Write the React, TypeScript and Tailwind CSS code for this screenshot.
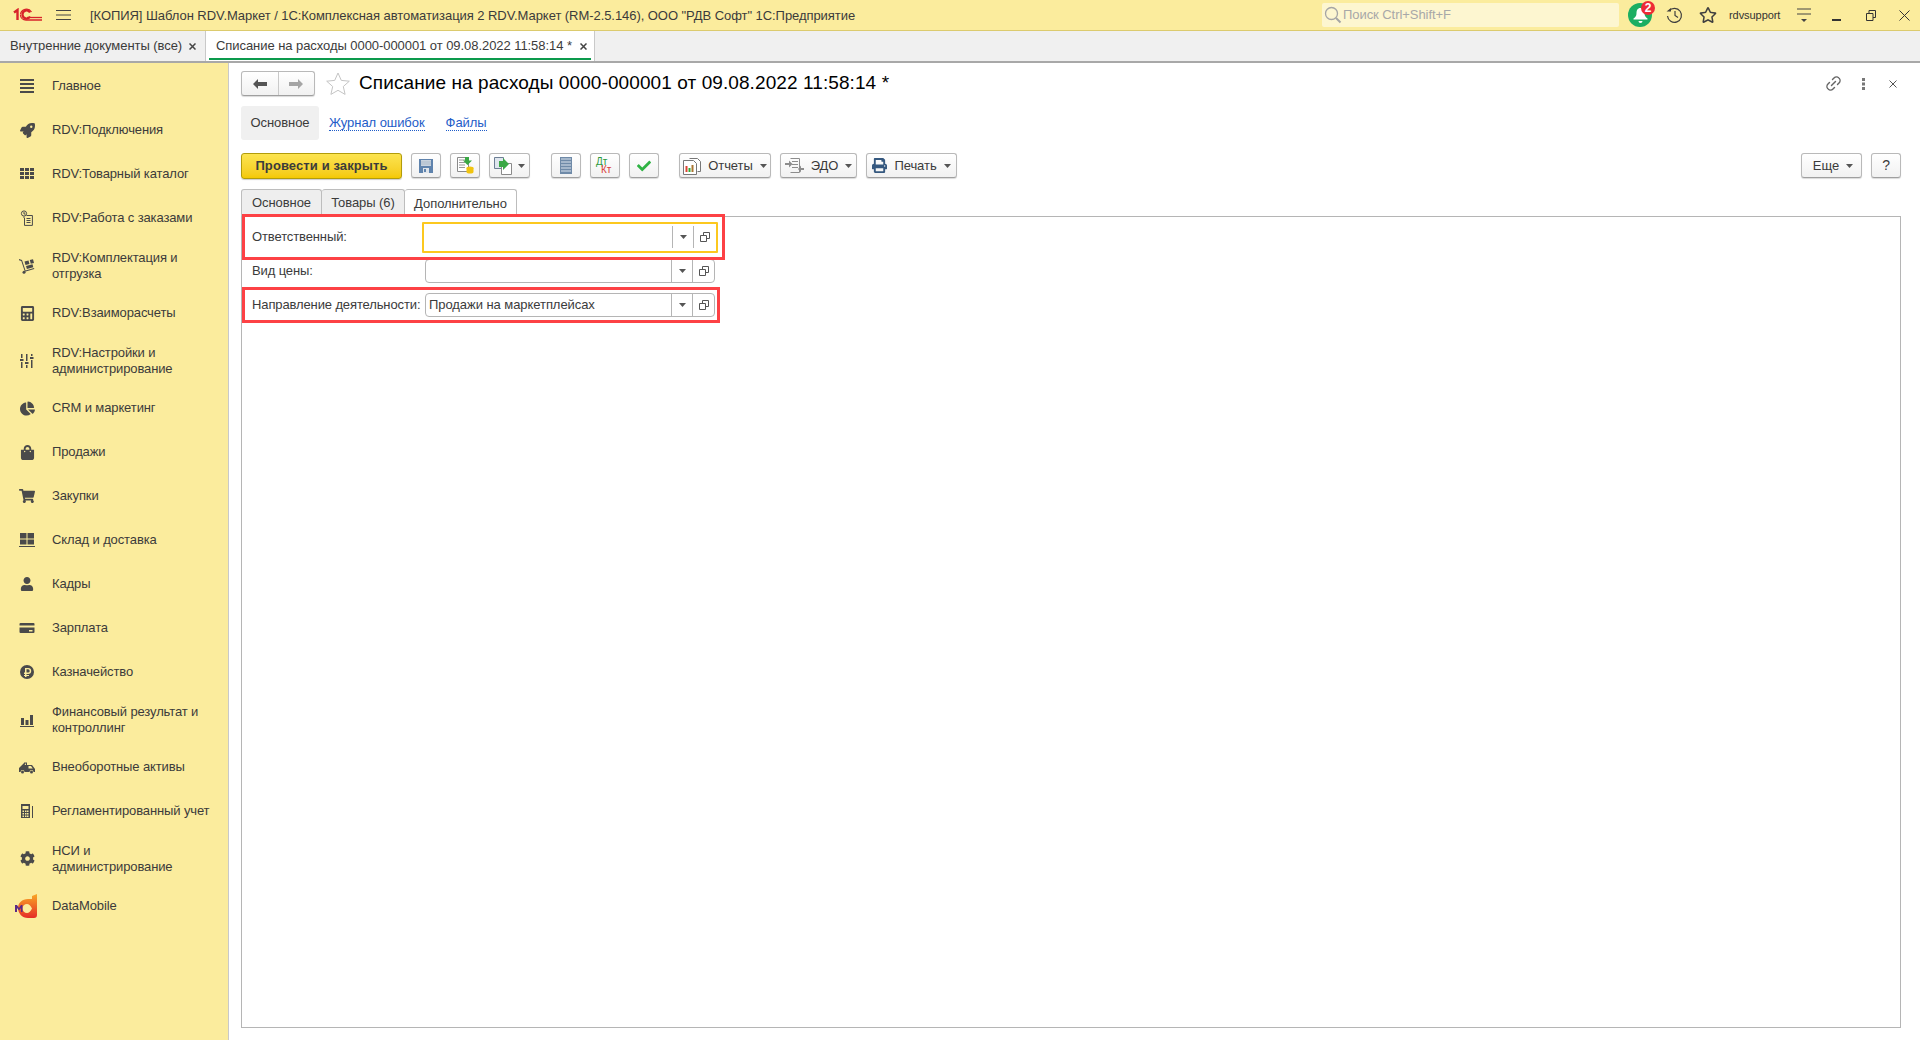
import React from 'react';
import { FaRocket, FaCalculator, FaChartPie, FaShoppingBag, FaShoppingCart, FaCog, FaUser, FaPrint, FaCheck, FaRegStar } from 'react-icons/fa';
import { FiLink2 } from 'react-icons/fi';

type IconProps = { className?: string };

const Caret: React.FC<IconProps> = ({ className }) => (
	<svg width="7" height="4" viewBox="0 0 7 4" className={className}>
		<path d="M0 0h7L3.5 4z" fill="#555" />
	</svg>
);

const Icon16: React.FC<{ children: React.ReactNode }> = ({ children }) => (
	<svg width="16" height="16" viewBox="0 0 16 16" fill="#4a4a4a">
		{children}
	</svg>
);

const HomeIcon = () => (
	<Icon16>
		<path d="M1 1h14v2H1zM1 5h14v2H1zM1 9h14v2H1zM1 13h14v2H1z" />
	</Icon16>
);
const CatalogIcon = () => (
	<Icon16>
		<path d="M1 2h4v3H1zM6 2h4v3H6zM11 2h4v3h-4zM1 6h4v3H1zM6 6h4v3H6zM11 6h4v3h-4zM1 10h4v3H1zM6 10h4v3H6zM11 10h4v3h-4z" />
	</Icon16>
);
const OrdersIcon = () => (
	<svg width="16" height="16" viewBox="0 0 16 16" fill="none" stroke="#4a4a4a">
		<circle cx="5" cy="3.5" r="2.6" />
		<path d="M5 2v2h1.5M5 6.5V8M7.5 5.5h5.9v9.9H5.5V8M7.5 8.5h4M7.5 10.5h4M7.5 12.5h4" />
	</svg>
);
const PickingIcon = () => (
	<Icon16>
		<path d="M0 1l3 1 3.5 10.5L15 10l.3 1-9.4 2.8L2.3 3 0 2.2z" />
		<circle cx="5" cy="14.3" r="1.5" />
		<path d="M5.5 3.5l4-1 1 3.5-4 1zM10.8 2l3.2-.8 1 3.7-3.2.8zM7 8l6.5-1.8.8 3-6.4 1.8z" />
	</Icon16>
);
const SlidersIcon = () => (
	<Icon16>
		<path d="M2 1h1.5v4H2zM1 6h3.5v2H1zM2 9h1.500v6H2zM7 1h1.500v7H7zM6 9h3.500v2H6zM7 12h1.500v3H7zM12 1h1.500v2H12zM11 4h3.500v2H11zM12 7h1.500v8H12z" />
	</Icon16>
);
const StockIcon = () => (
	<Icon16>
		<path d="M1 1h6.500v5.500H1zM8.500 1H15v5.500H8.500zM1 7.500h6.500v5H1zM8.500 7.500H15v5H8.500zM0 14h16v1H0z" />
	</Icon16>
);
const CardIcon = () => (
	<Icon16>
		<path fillRule="evenodd" d="M1.500 3h13a1 1 0 011 1v1.500H.5V4a1 1 0 011-1zM.5 7.500h15V12a1 1 0 01-1 1h-13a1 1 0 01-1-1zM10 10v1.500h3.500V10z" />
	</Icon16>
);
const TreasuryIcon = () => (
	<Icon16>
		<path fillRule="evenodd" d="M8 1a7 7 0 110 14A7 7 0 018 1zM6 4v4.500H5V10h1v1H5v1h1v1h1.500v-1H10v-1H7.500v-1h1.700a3 3 0 000-6zM7.500 5.300h1.600a1.600 1.600 0 010 3.200H7.500z" />
	</Icon16>
);
const BarsIcon = () => (
	<Icon16>
		<path d="M2 6h3v7H2zM6.500 8h3v5h-3zM11 3h3v10h-3zM1 14h14v1H1z" />
	</Icon16>
);
const AssetsIcon = () => (
	<Icon16>
		<path d="M0 9l6-6 1 1-1.500 2H7V4l1-1v3h5l3 4v3h-1.500a2 2 0 00-4 0H5.500a2 2 0 00-4 0H0zM9.500 7v2.500h4.300L12 7z" />
		<circle cx="3.500" cy="13" r="1.500" />
		<circle cx="12.500" cy="13" r="1.500" />
	</Icon16>
);
const RegIcon = () => (
	<Icon16>
		<path fillRule="evenodd" d="M2 1h9v14H2zM3.500 3v3h6V3zM3.500 7.500V9h1.500V7.500zM6 7.500V9h1.500V7.500zM8 7.500V9h1.500V7.500zM3.500 10v1.500h1.500V10zM6 10v1.500h1.500V10zM8 10v1.500h1.500V10zM3.500 12.500V14h1.500v-1.500zM6 12.500V14h1.500v-1.500zM8 12.500V14h1.500v-1.500z" />
		<path d="M13 3h1v12h-1z" />
	</Icon16>
);
const DataMobileIcon = () => (
	<svg width="24" height="25" viewBox="0 0 24 25">
		<defs>
			<linearGradient id="dm" x1="0" y1="0" x2="0" y2="1">
				<stop offset="0" stopColor="#f9a825" />
				<stop offset="1" stopColor="#e52d27" />
			</linearGradient>
		</defs>
		<path
			fillRule="evenodd"
			fill="url(#dm)"
			d="M22 0v21a3 3 0 01-3 3h-6C7 24 3 19 3 14S7 5 13 5h4V2zM12 10a4.500 4.500 0 000 9c2 0 3-1 5-4.500C15 11 14 10 12 10z"
		/>
		<path d="M0 11h2l2 3 2-3h1.500v7H6v-4l-2 2.500L2 14v4H0z" fill="#5b2a86" />
	</svg>
);

const OneCLogo = () => (
	<svg width="30" height="14" viewBox="0 0 30 14" fill="none" stroke="#d8232a">
		<path d="M1 4.500L4.500 2v10" strokeWidth="2.400" />
		<path d="M17 4.500A4 4 0 009.500 6.500 4 4 0 0017 8.500" strokeWidth="2.200" />
		<path d="M7.500 6.500a6 6 0 0111-2.500M7.500 7c0 3 2.500 5 5.500 5h16" strokeWidth="1.300" />
		<path d="M14 9.500h15" strokeWidth="1.300" />
	</svg>
);

const menu: { label: React.ReactNode; icon: React.ReactNode; tall?: boolean }[] = [
	{ label: 'Главное', icon: <HomeIcon /> },
	{ label: 'RDV:Подключения', icon: <FaRocket size={15} color="#4a4a4a" /> },
	{ label: 'RDV:Товарный каталог', icon: <CatalogIcon /> },
	{ label: 'RDV:Работа с заказами', icon: <OrdersIcon /> },
	{ label: <>RDV:Комплектация и<br />отгрузка</>, icon: <PickingIcon />, tall: true },
	{ label: 'RDV:Взаиморасчеты', icon: <FaCalculator size={15} color="#4a4a4a" /> },
	{ label: <>RDV:Настройки и<br />администрирование</>, icon: <SlidersIcon />, tall: true },
	{ label: 'CRM и маркетинг', icon: <FaChartPie size={15} color="#4a4a4a" /> },
	{ label: 'Продажи', icon: <FaShoppingBag size={15} color="#4a4a4a" /> },
	{ label: 'Закупки', icon: <FaShoppingCart size={16} color="#4a4a4a" /> },
	{ label: 'Склад и доставка', icon: <StockIcon /> },
	{ label: 'Кадры', icon: <FaUser size={14} color="#4a4a4a" /> },
	{ label: 'Зарплата', icon: <CardIcon /> },
	{ label: 'Казначейство', icon: <TreasuryIcon /> },
	{ label: <>Финансовый результат и<br />контроллинг</>, icon: <BarsIcon />, tall: true },
	{ label: 'Внеоборотные активы', icon: <AssetsIcon /> },
	{ label: 'Регламентированный учет', icon: <RegIcon /> },
	{ label: <>НСИ и<br />администрирование</>, icon: <FaCog size={15} color="#4a4a4a" />, tall: true },
	{ label: 'DataMobile', icon: <DataMobileIcon /> },
];

const Sidebar = () => (
	<aside className="w-[229px] shrink-0 border-r border-[#c9c9c9] bg-[#fbec9d] pt-px">
		{menu.map((item, i) => (
			<div key={i} className={`flex items-center ${item.tall ? 'h-[51px]' : 'h-[44px]'}`}>
				<div className="flex w-[52px] shrink-0 justify-center pl-[2px]">{item.icon}</div>
				<div className="text-[13px] leading-[16px] tracking-[-0.12px] text-[#3b3b3b]">{item.label}</div>
			</div>
		))}
	</aside>
);

const Header = () => (
	<header className="flex h-[31px] shrink-0 items-center border-b border-[#dccb6e] bg-[#fbec9d]">
		<div className="ml-[13px]">
			<OneCLogo />
		</div>
		<svg width="15" height="12" viewBox="0 0 15 12" className="ml-[13px]" stroke="#444">
			<path d="M0 1.500h15M0 6h15M0 10.500h15" />
		</svg>
		<div className="ml-[19px] pt-px text-[13px] text-[#3b3b3b]">
			[КОПИЯ] Шаблон RDV.Маркет / 1С:Комплексная автоматизация 2 RDV.Маркет (RM-2.5.146), ООО "РДВ Софт" 1С:Предприятие
		</div>
		<div className="ml-auto flex h-[24px] w-[297px] items-center gap-[1px] rounded-[2px] bg-[#fdf6d0] pl-[2px] text-[13px] text-[#a8a8a8]">
			<svg width="18" height="18" viewBox="0 0 18 18" fill="none" stroke="#a5a5a5" strokeWidth="1.300">
				<circle cx="7.500" cy="7.500" r="6" />
				<path d="M12 12l4.500 4.500" strokeWidth="2" />
			</svg>
			Поиск Ctrl+Shift+F
		</div>
		<div className="relative ml-[9px] flex h-[24px] w-[24px] items-center justify-center rounded-full bg-[#1cae62]">
			<svg width="15" height="16" viewBox="0 0 15 16" fill="#fff">
				<path d="M7.500 1c3 0 4 2.500 4 5 0 3 1 4 3 5.500v1H.5v-1c2-1.500 3-2.500 3-5.500 0-2.500 1-5 4-5zM5.500 14h4a2 2 0 01-4 0z" />
			</svg>
			<span className="absolute right-[-3px] top-[-2px] flex h-[14px] w-[14px] items-center justify-center rounded-full bg-[#ee2b35] text-[12px] font-bold leading-none text-white">
				2
			</span>
		</div>
		<svg width="18" height="18" viewBox="0 0 18 18" fill="none" stroke="#3f3f3f" strokeWidth="1.200" className="ml-[14px]">
			<path d="M3 5a7 7 0 11-1.500 5M9 5v4.500l3 2" />
			<path d="M.5 5.500h4.500V2z" fill="#3f3f3f" stroke="none" />
		</svg>
		<FaRegStar size={18} color="#3f3f3f" className="ml-[15px]" />
		<div className="ml-[12px] w-[54px] text-[11px] text-[#333]">rdvsupport</div>
		<svg width="14" height="15" viewBox="0 0 14 15" className="ml-[14px]">
			<path d="M0 1h14M0 6h14" stroke="#444" />
			<path d="M4 11h6l-3 3z" fill="#444" />
		</svg>
		<div className="ml-[21px] mt-[10px] h-[1.500px] w-[9px] bg-[#333]" />
		<svg width="10" height="11" viewBox="0 0 10 11" fill="none" stroke="#333" className="ml-[25px]">
			<path d="M.5 3.500h6.500v7H.5zM3 3.500V.5h6.500v7H7" />
		</svg>
		<svg width="11" height="11" viewBox="0 0 11 11" stroke="#333" className="ml-[23px] mr-[10px]">
			<path d="M.5.5l10 10M10.500.5l-10 10" />
		</svg>
	</header>
);

const Close = () => (
	<svg width="7" height="7" viewBox="0 0 7 7" stroke="#444" strokeWidth="1.500">
		<path d="M.5.5l6 6M6.500.5l-6 6" />
	</svg>
);

const TabStrip = () => (
	<div className="flex h-[32px] shrink-0 border-b-2 border-[#a8a8a8] bg-[#f0f0f0]">
		<div className="flex w-[205px] items-center gap-[7px] pl-[10px] text-[13px] text-[#3b3b3b]">
			Внутренние документы (все) <Close />
		</div>
		<div className="relative flex w-[390px] items-center gap-[8px] border-x border-[#c9c9c9] bg-white pl-[10px] text-[13px] text-[#3b3b3b]">
			Списание на расходы 0000-000001 от 09.08.2022 11:58:14 * <Close />
			<span className="absolute bottom-[1px] left-[3px] right-[3px] h-[2px] bg-[#0c9a4c]" />
		</div>
	</div>
);

const btn =
	'flex h-[25px] items-center justify-center rounded-[3px] border border-[#b9b9b9] border-b-[#9f9f9f] bg-linear-to-b from-white to-[#f1f1f1] shadow-[0_1px_1px_rgba(0,0,0,0.15)]';

const FloppyIcon = () => (
	<svg width="14" height="14" viewBox="0 0 14 14">
		<path d="M0 0h14v14H0z" fill="#5f83ad" />
		<path d="M2 1h10v6H2z" fill="#c9d3de" />
		<path d="M2 3h10M2 5h10" stroke="#aebccb" />
		<path d="M4 9h6v5H4z" fill="#dfe4ea" />
		<path d="M5 10h2v3H5z" fill="#5f83ad" />
	</svg>
);

const ReportIcon = () => (
	<svg width="18" height="18" viewBox="0 0 18 18" fill="none" stroke="#777">
		<path d="M6.500 1.500h8l3 3v10h-3M.5 3.500h10l3 3v11H.5z" fill="#fff" />
		<path d="M3.500 9v6" stroke="#d43" strokeWidth="2" />
		<path d="M6.500 11v4" stroke="#3a3" strokeWidth="2" />
		<path d="M9.500 8v7" stroke="#a73" strokeWidth="2" />
	</svg>
);

const DocIcon = () => (
	<svg width="19" height="19" viewBox="0 0 19 19">
		<path d="M1.500 1.500h11v14h-11z" fill="#fff" stroke="#8a8a8a" />
		<path d="M3 4h8M3 6.500h6M3 9h6M3 11.500h6" stroke="#999" />
		<path d="M9 1h4v3.500h3L11.500 9 7 4.500h2z" fill="#3aa845" />
		<ellipse cx="14" cy="12" rx="3.500" ry="1.500" fill="#f1c40f" />
		<path d="M10.500 12v4c0 2 7 2 7 0v-4" fill="#f1c40f" />
	</svg>
);

const CopyIcon = () => (
	<svg width="19" height="18" viewBox="0 0 19 18">
		<path d="M.5.5h9v11h-9z" fill="#dfe6ee" stroke="#6d7f95" />
		<path d="M7.500 6.500h10v11h-10z" fill="#fff" stroke="#8a8a8a" />
		<path d="M5 4h4V1l6 6-6 6v-3H5z" fill="#3aa845" />
	</svg>
);

const EdoIcon = () => (
	<svg width="19" height="17" viewBox="0 0 19 17" fill="none" stroke="#8d8d8d">
		<path d="M5.500 1.500h9v14h-9M7 4.500h6M7 7.500h6M7 10.500h6" />
		<path d="M0 6h4V3.500L7.500 7 4 10.500V8H0zM19 11h-3V8.500L13 12l3 3.500V13h3z" fill="#8d8d8d" stroke="none" />
	</svg>
);

const Toolbar = () => (
	<div className="mt-[13px] flex items-start">
		<div className="flex h-[26px] w-[161px] items-center justify-center rounded-[3px] border border-[#b29c0b] bg-linear-to-b from-[#fce44e] to-[#f4c900] text-[13px] font-bold tracking-[0.1px] text-[#3b3b3b] shadow-[0_1px_1px_rgba(0,0,0,0.2)]">
			Провести и закрыть
		</div>
		<div className={`${btn} ml-[9px] w-[30px]`}>
			<FloppyIcon />
		</div>
		<div className={`${btn} ml-[9px] w-[30px]`}>
			<DocIcon />
		</div>
		<div className={`${btn} ml-[9px] w-[41px] gap-[5px]`}>
			<CopyIcon />
			<Caret />
		</div>
		<div className={`${btn} ml-[21px] w-[30px]`}>
			<svg width="12" height="17" viewBox="0 0 12 17">
				<path d="M0 0h12v17H0z" fill="#6f8aa8" />
				<path d="M1 2h10M1 5h10M1 8h10M1 11h10M1 14h10" stroke="#dce4ed" strokeWidth="1.200" />
			</svg>
		</div>
		<div className={`${btn} ml-[9px] w-[30px]`}>
			<div className="flex w-[18px] flex-col text-[10px] leading-[8px]">
				<span className="text-[#2c9a3e]">Дт</span>
				<span className="pl-[5px] text-[#d9413a]">Кт</span>
			</div>
		</div>
		<div className={`${btn} ml-[9px] w-[30px]`}>
			<FaCheck size={14} color="#2fb344" />
		</div>
		<div className={`${btn} ml-[20px] w-[92px] gap-[7px] text-[13px] text-[#3b3b3b]`}>
			<ReportIcon />
			Отчеты
			<Caret />
		</div>
		<div className={`${btn} ml-[9px] w-[77px] gap-[7px] text-[13px] text-[#3b3b3b]`}>
			<EdoIcon />
			ЭДО
			<Caret />
		</div>
		<div className={`${btn} ml-[9px] w-[91px] gap-[7px] text-[13px] text-[#3b3b3b]`}>
			<FaPrint size={15} color="#35587f" />
			Печать
			<Caret />
		</div>
		<div className={`${btn} ml-auto w-[61px] gap-[7px] pl-[3px] text-[13px] text-[#3b3b3b]`}>
			Еще
			<Caret />
		</div>
		<div className={`${btn} ml-[9px] w-[30px] text-[14px] text-[#3b3b3b]`}>?</div>
	</div>
);

const Field: React.FC<{ value?: string; focused?: boolean }> = ({ value, focused }) => (
	<div
		className={`flex items-center bg-white text-[13px] text-[#3b3b3b] ${
			focused
				? 'ml-[-3px] mr-[-3px] h-[31px] w-[296px] rounded-[1px] border-2 border-[#fcc81f]'
				: 'h-[24px] w-[290px] rounded-[4px] border border-[#b5b5b5]'
		}`}
	>
		<div className="min-w-0 flex-1 pl-[3px]">{value}</div>
		<div className="flex h-[22px] w-[21px] items-center justify-center border-l border-[#b5b5b5]">
			<Caret />
		</div>
		<div className={`flex h-[22px] items-center justify-center border-l border-[#b5b5b5] ${focused ? 'w-[23px]' : 'w-[22px]'}`}>
			<svg width="10" height="10" viewBox="0 0 10 10" fill="none" stroke="#555">
				<path d="M3.500 3.500V.5h6v6h-3M.5 3.500h6v6h-6z" />
			</svg>
		</div>
	</div>
);

const Row: React.FC<{ label: string; children: React.ReactNode }> = ({ label, children }) => (
	<div className="flex h-[24px] items-center">
		<div className="w-[183px] shrink-0 pl-[10px] text-[13px] tracking-[-0.12px] text-[#3b3b3b]">{label}</div>
		{children}
	</div>
);

const FormTabs = () => (
	<div className="mt-[10px] flex h-[27px] text-[13px] text-[#3b3b3b]">
		<div className="flex w-[81px] items-center justify-center rounded-t-[3px] border border-b-0 border-[#bdbdbd] bg-[#eeeeee]">Основное</div>
		<div className="flex w-[83px] items-center justify-center rounded-t-[3px] border border-b-0 border-l-0 border-[#bdbdbd] bg-[#eeeeee]">Товары (6)</div>
		<div className="relative z-10 mb-[-1px] flex w-[112px] items-center justify-center rounded-t-[3px] border border-b-0 border-l-0 border-[#bdbdbd] bg-white">
			Дополнительно
		</div>
	</div>
);

const Form = () => (
	<div className="relative flex flex-1 flex-col border border-[#b5b5b5] pt-[8px]">
		<div className="flex flex-col gap-[10px]">
			<Row label="Ответственный:">
				<Field focused />
			</Row>
			<Row label="Вид цены:">
				<Field />
			</Row>
			<Row label="Направление деятельности:">
				<Field value="Продажи на маркетплейсах" />
			</Row>
		</div>
		{/* красные рамки поверх скриншота */}
		<div className="absolute left-0 top-[-3px] z-20 h-[46px] w-[483px] border-[3px] border-[#fd4145]" />
		<div className="absolute left-0 top-[70px] z-20 h-[36px] w-[478px] border-[3px] border-[#fd4145]" />
	</div>
);

const Main = () => (
	<main className="flex min-w-0 flex-1 flex-col bg-white pb-[12px] pl-[12px] pr-[19px] pt-[8px]">
		<div className="flex h-[25px] items-center">
			<div className={`${btn} h-[24px] w-[74px]`}>
				<div className="flex h-full flex-1 items-center justify-center border-r border-[#c9c9c9]">
					<svg width="14" height="10" viewBox="0 0 14 10">
						<path d="M0 5l5-5v3h9v4H5v3z" fill="#555" />
					</svg>
				</div>
				<div className="flex h-full flex-1 items-center justify-center">
					<svg width="14" height="10" viewBox="0 0 14 10">
						<path d="M14 5L9 0v3H0v4h9v3z" fill="#a5a5a5" />
					</svg>
				</div>
			</div>
			<svg width="24" height="23" viewBox="0 0 24 23" fill="none" stroke="#c4c4c4" className="ml-[11px]">
				<path d="M12 1l3.300 7.400 8 .8-6 5.300 1.800 7.900-7.100-4.100-7.100 4.100 1.800-7.900-6-5.300 8-.8z" />
			</svg>
			<h1 className="ml-[9px] text-[19px] tracking-[0.09px] text-black">Списание на расходы 0000-000001 от 09.08.2022 11:58:14 *</h1>
			<FiLink2 size={17} color="#666" className="ml-auto mr-[20px] -rotate-45" />
			<svg width="3" height="12" viewBox="0 0 3 12" fill="#777" className="mr-[24px]">
				<path d="M0 0h3v3H0zM0 4.500h3v3H0zM0 9h3v3H0z" />
			</svg>
			<svg width="8" height="8" viewBox="0 0 8 8" stroke="#555" className="mr-[4px]">
				<path d="M.5.5l7 7M7.500.5l-7 7" />
			</svg>
		</div>
		<div className="mt-[10px] flex h-[34px] items-center text-[13px]">
			<div className="flex h-full w-[78px] items-center justify-center rounded-[3px] bg-[#f0f0f0] text-[#3b3b3b]">Основное</div>
			<a className="ml-[10px] border-b border-dotted border-[#1e5cc8] leading-[15px] text-[#1e5cc8]">Журнал ошибок</a>
			<a className="ml-[21px] border-b border-dotted border-[#1e5cc8] leading-[15px] text-[#1e5cc8]">Файлы</a>
		</div>
		<Toolbar />
		<FormTabs />
		<Form />
	</main>
);

export default function App() {
	return (
		<div className="flex h-[1040px] w-[1920px] flex-col overflow-hidden bg-white font-['Liberation_Sans',Arial,sans-serif] tracking-[-0.06px]">
			<Header />
			<TabStrip />
			<div className="flex min-h-0 flex-1">
				<Sidebar />
				<Main />
			</div>
		</div>
	);
}
